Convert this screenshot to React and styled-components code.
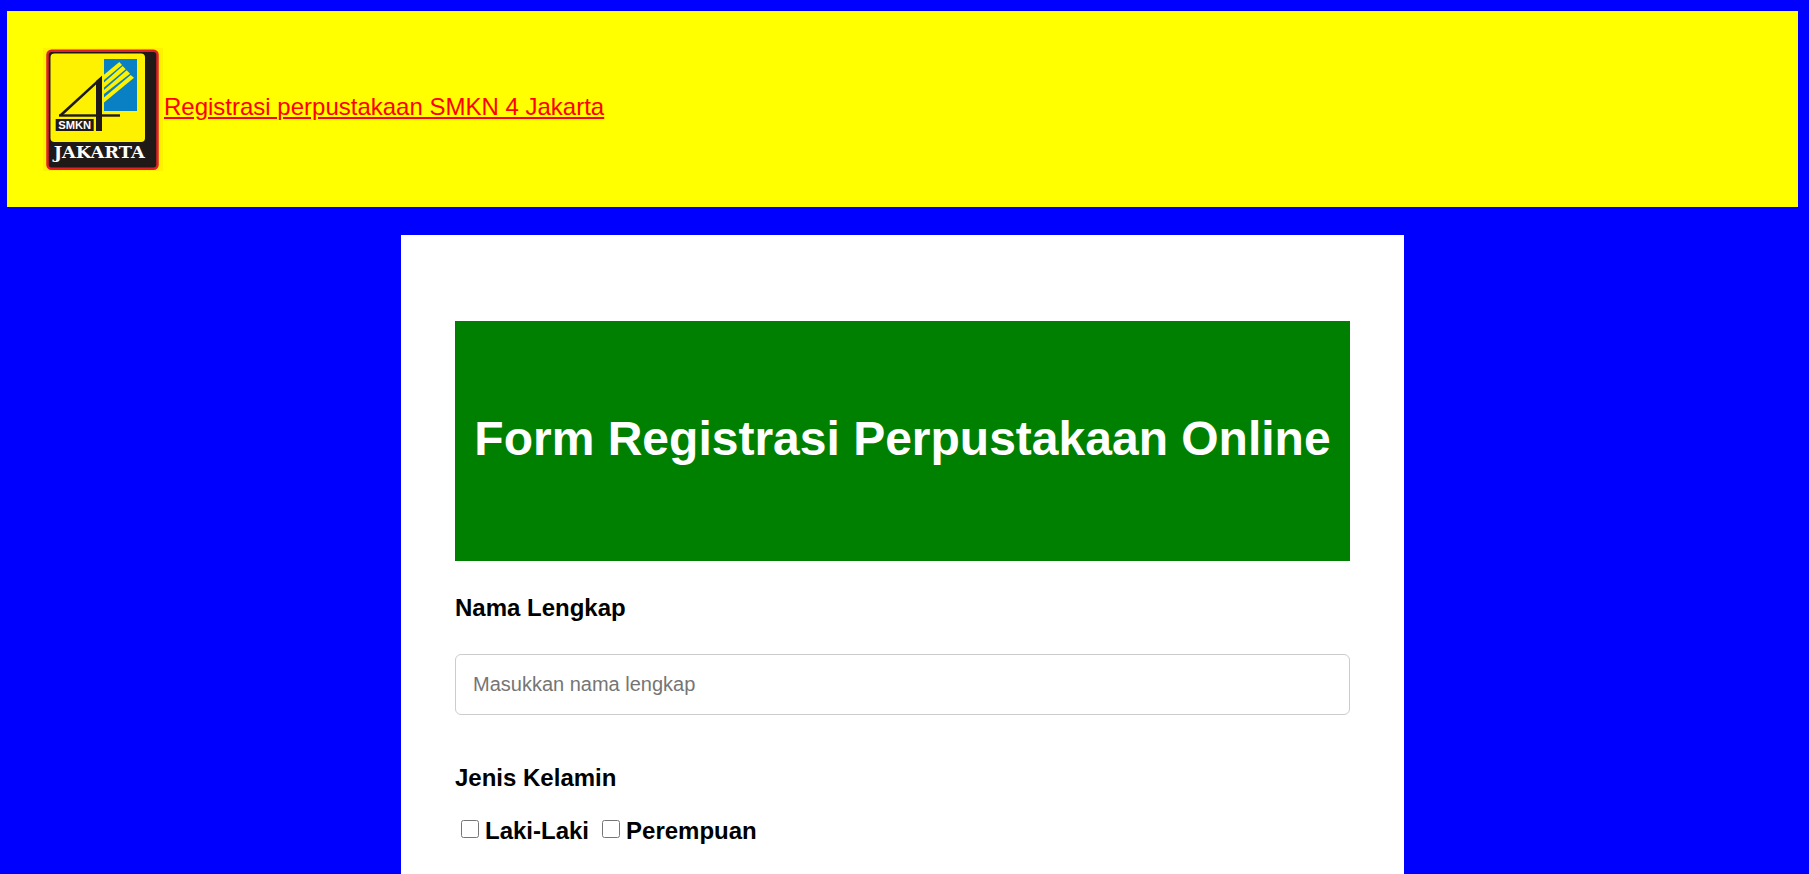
import React from "react";
import styled, { createGlobalStyle } from "styled-components";

const GlobalStyle = createGlobalStyle`
  html, body {
    margin: 0;
    height: 100%;
    overflow: hidden;
    background: #0000ff;
    font-family: "Liberation Sans", Arial, sans-serif;
  }
`;

const Page = styled.div`
  box-sizing: border-box;
  height: 874px;
  padding: 11px 11px 0 7px;
  display: flex;
  flex-direction: column;
  gap: 28px;
`;

const Header = styled.header`
  height: 196px;
  padding-left: 36px;
  background: #ffff00;
  display: flex;
  align-items: center;
  flex-shrink: 0;
`;

const HeaderLink = styled.a`
  margin: 0 0 5px 1px;
  color: #ff0000;
  font-size: 24px;
  text-decoration: underline;
`;

const Panel = styled.main`
  box-sizing: border-box;
  width: 1003px;
  flex: 1;
  margin: 0 auto;
  padding: 86px 54px 0;
  background: #ffffff;
`;

const TitleBar = styled.div`
  height: 240px;
  padding-bottom: 5px;
  box-sizing: border-box;
  background: #008000;
  display: flex;
  align-items: center;
  justify-content: center;
`;

const Title = styled.h1`
  margin: 0;
  color: #ffffff;
  font-size: 48px;
  font-weight: 700;
`;

const Label = styled.label`
  display: block;
  margin-top: ${(p) => p.$top}px;
  font-size: 24px;
  line-height: 26px;
  font-weight: 700;
  color: #000000;
`;

const TextInput = styled.input`
  display: block;
  box-sizing: border-box;
  width: 100%;
  height: 61px;
  margin-top: 33px;
  padding: 0 17px;
  border: 1px solid #cccccc;
  border-radius: 6px;
  background: #ffffff;
  font-family: inherit;
  font-size: 20px;
  &::placeholder {
    color: #757575;
  }
`;

const GenderRow = styled.div`
  display: flex;
  align-items: center;
  margin: 26px 0 0 6px;
`;

const GenderOption = styled.label`
  display: flex;
  align-items: center;
  margin-right: 13px;
  font-size: 24px;
  font-weight: 700;
  color: #000000;
`;

const Check = styled.input`
  width: 18px;
  height: 18px;
  margin: 0 6px 5px 0;
`;

function SchoolLogo() {
  return (
    <svg width="120" height="123" viewBox="0 0 120 123" style={{ flexShrink: 0 }}>
      <rect width="120" height="123" fill="#fff200" />
      <rect x="4.5" y="2.75" width="110" height="118" rx="4" fill="#1f1a17" stroke="#e0202a" strokeWidth="2.5" />
      <rect x="7.5" y="5.5" width="94.5" height="88.5" rx="4" fill="#fff200" />
      <rect x="61" y="11" width="33" height="52" fill="#0a80c4" />
      <g fill="#fff200">
        <polygon points="60.7,27 76.3,14 79,17 60.7,32.3" />
        <polygon points="60.7,34.7 79.7,18 82.7,21.3 60.7,39.7" />
        <polygon points="60.7,42.3 83.7,22.3 87,25.7 60.7,46.3" />
        <polygon points="60.7,49.7 87.7,27 91,29.7 60.7,54.7" />
      </g>
      <g fill="#1f1a17">
        <polygon points="16,67 59,27.7 59,31 20,67" />
        <polygon points="53,33 59,28 59,83 53,83" />
        <rect x="16" y="66.3" width="61" height="2.4" />
        <rect x="12.7" y="71" width="38" height="12" />
      </g>
      <text x="31.7" y="80.5" textAnchor="middle" textLength="33" lengthAdjust="spacingAndGlyphs"
        fontFamily="Liberation Sans, sans-serif" fontWeight="700" fontSize="10" fill="#ffffff">SMKN</text>
      <text x="56.2" y="110" textAnchor="middle" textLength="91" lengthAdjust="spacingAndGlyphs"
        fontFamily="'DejaVu Serif', serif" fontWeight="700" fontSize="16" fill="#ffffff">JAKARTA</text>
    </svg>
  );
}

export default function App() {
  return (
    <>
      <GlobalStyle />
      <Page>
        <Header>
          <SchoolLogo />
          <HeaderLink href="#">Registrasi perpustakaan SMKN 4 Jakarta</HeaderLink>
        </Header>
        <Panel>
          <TitleBar>
            <Title>Form Registrasi Perpustakaan Online</Title>
          </TitleBar>
          <Label $top={34} htmlFor="nama">Nama Lengkap</Label>
          <TextInput id="nama" type="text" placeholder="Masukkan nama lengkap" />
          <Label $top={50}>Jenis Kelamin</Label>
          <GenderRow>
            <GenderOption><Check type="checkbox" />Laki-Laki</GenderOption>
            <GenderOption><Check type="checkbox" />Perempuan</GenderOption>
          </GenderRow>
        </Panel>
      </Page>
    </>
  );
}
